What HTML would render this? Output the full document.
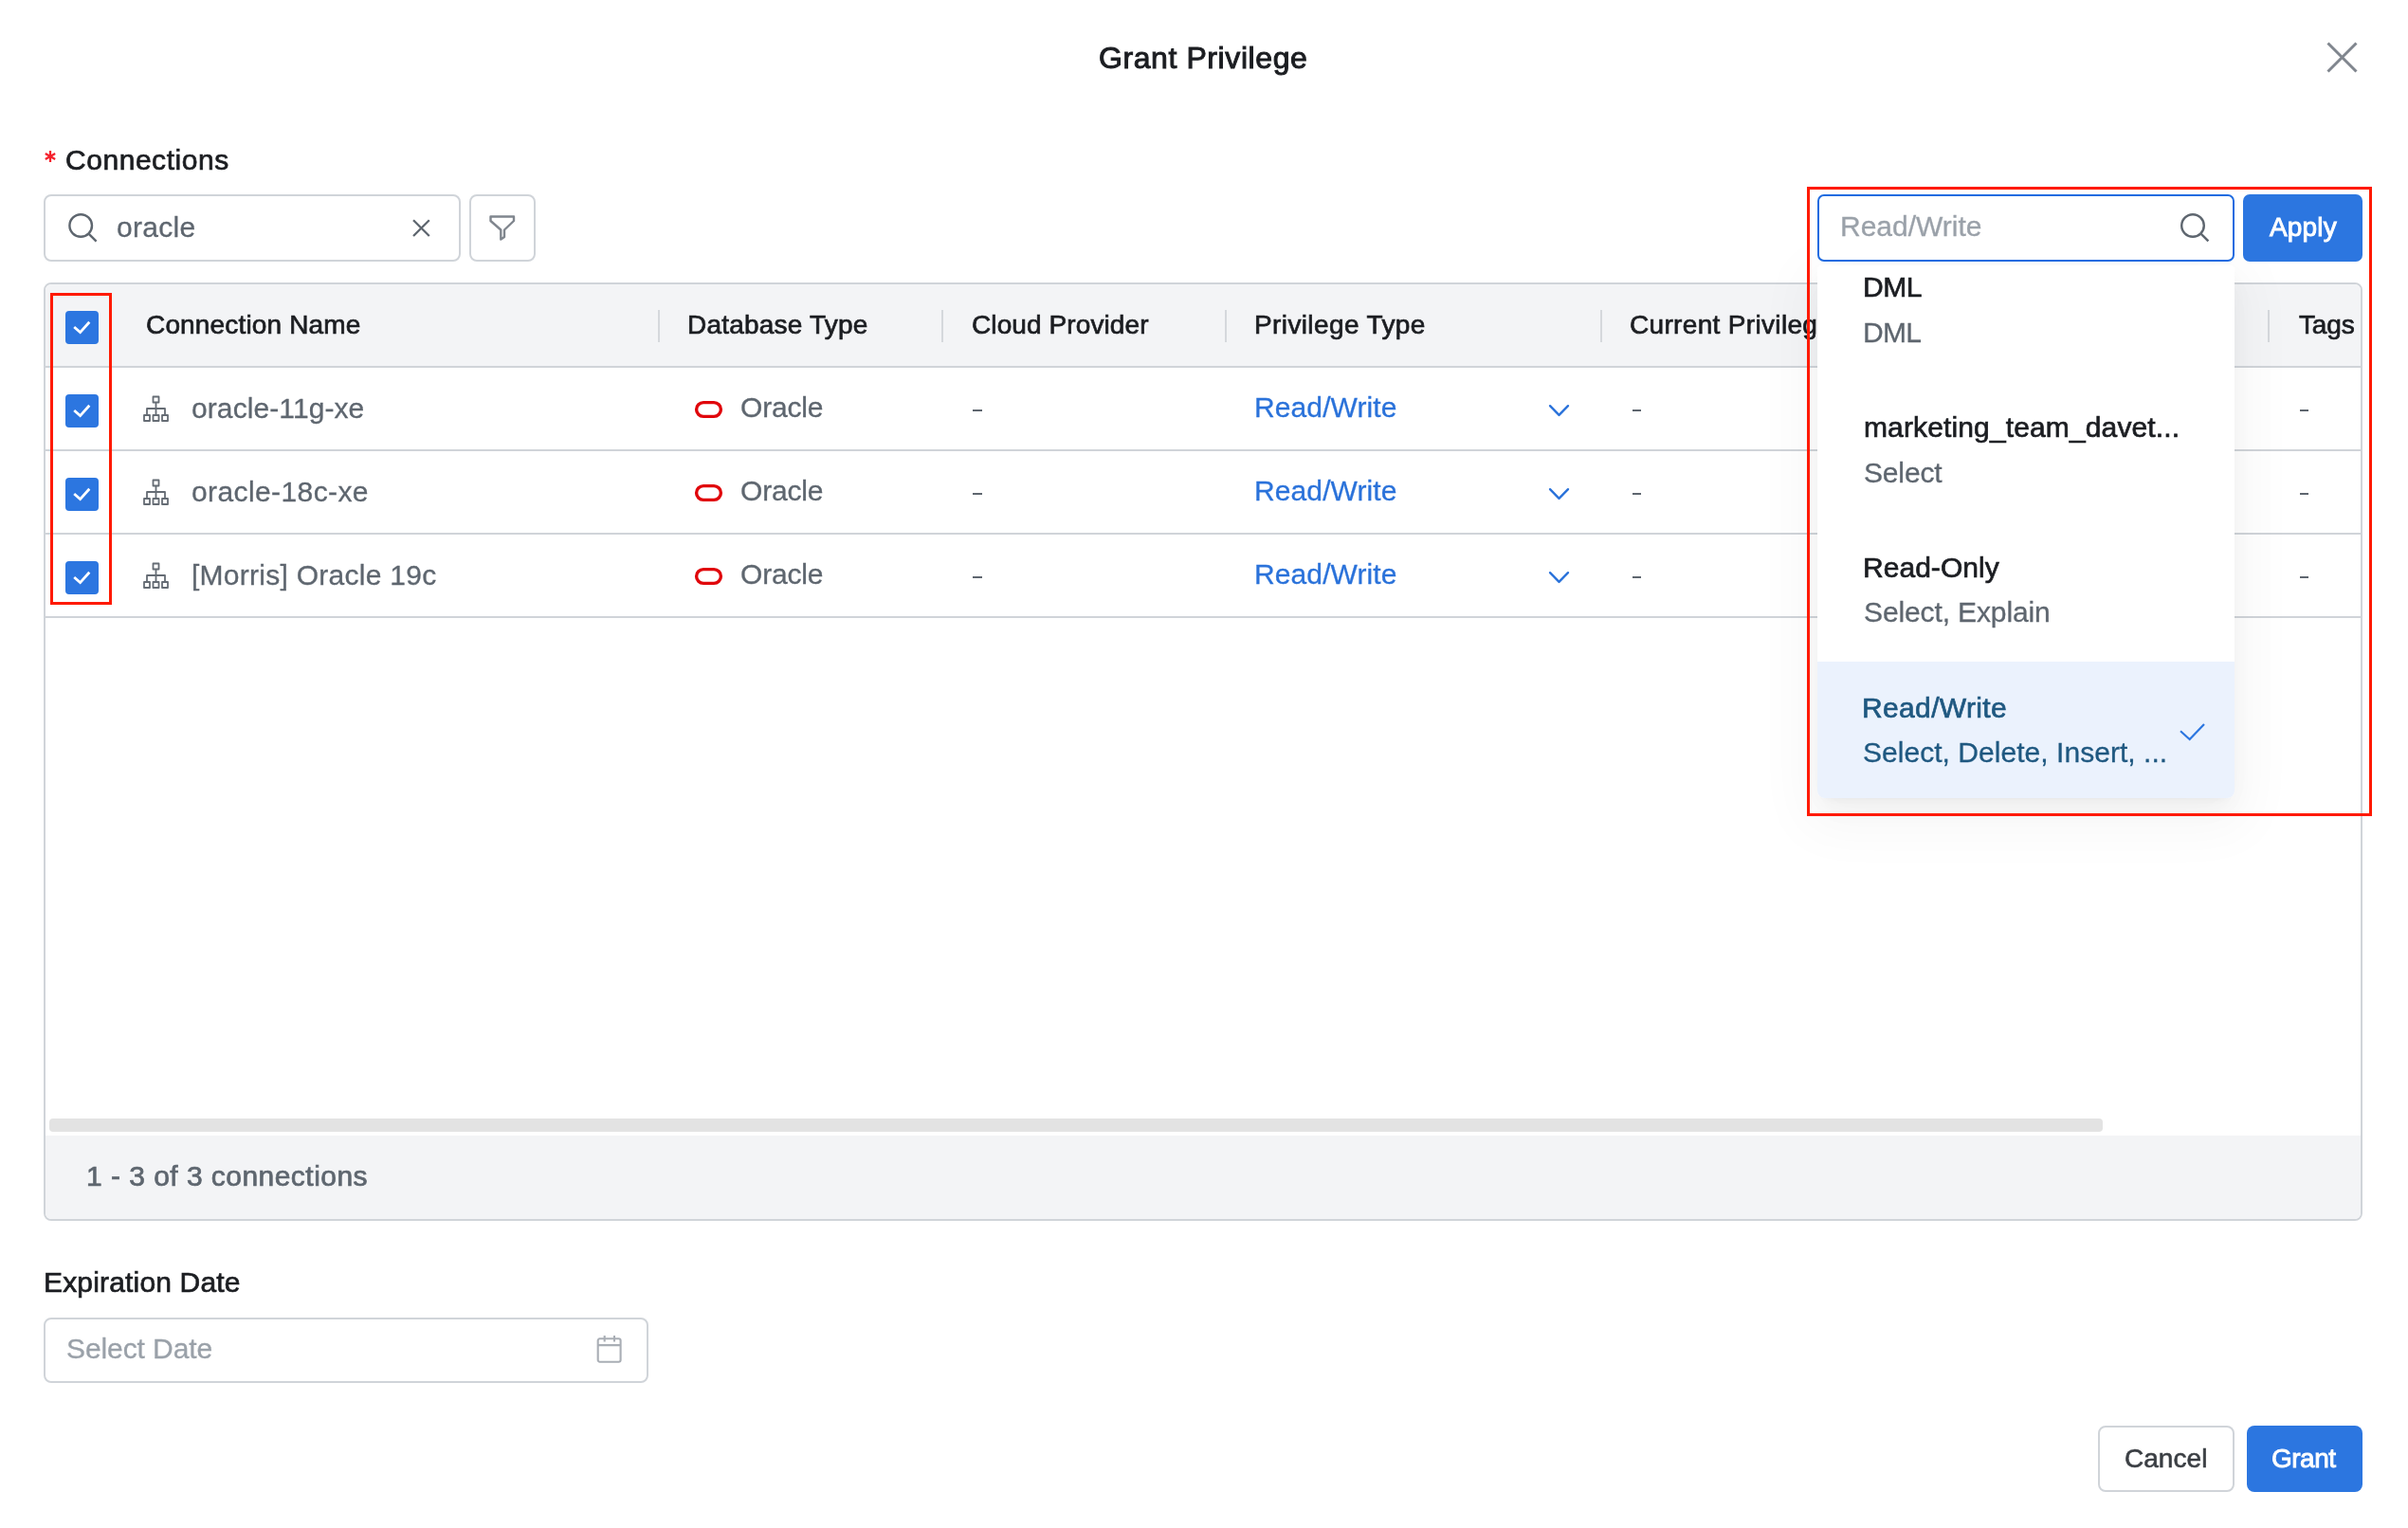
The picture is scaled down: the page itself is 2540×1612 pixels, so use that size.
<!DOCTYPE html>
<html><head><meta charset="utf-8"><title>Grant Privilege</title><style>
html,body{margin:0;padding:0;background:#fff;width:2540px;height:1612px;overflow:hidden;position:relative;font-family:"Liberation Sans",sans-serif;}
.t{position:absolute;white-space:nowrap;line-height:1;will-change:transform;}
.b{position:absolute;box-sizing:border-box;}
svg{position:absolute;overflow:visible;}
</style></head><body>
<div class="t" style="left:1158.80px;top:45.15px;font-size:32px;color:#1b1d21;letter-spacing:0.586px;-webkit-text-stroke:1.0px #1b1d21;">Grant Privilege</div>
<svg style="left:2454px;top:44px" width="33" height="33" viewBox="0 0 33 33"><path d="M1.5 1.5L31.5 31.5M31.5 1.5L1.5 31.5" stroke="#80868e" stroke-width="3" fill="none"/></svg>
<svg style="left:46px;top:158px" width="14" height="14" viewBox="0 0 14 14"><g stroke="#f5222d" stroke-width="2.3" fill="none"><path d="M7 1V13"/><path d="M1.8 4L12.2 10"/><path d="M1.8 10L12.2 4"/></g></svg>
<div class="t" style="left:69.20px;top:154.10px;font-size:30px;color:#1b1d21;letter-spacing:0.54px;-webkit-text-stroke:0.7px #1b1d21;">Connections</div>
<div class="b" style="left:46px;top:205px;width:440px;height:71px;border:2px solid #d0d4d9;border-radius:8px;"></div>
<svg style="left:70px;top:223px" width="36" height="36" viewBox="0 0 36 36"><circle cx="15.2" cy="15" r="11.8" stroke="#5e666f" stroke-width="2.4" fill="none"/><path d="M23.8 23.8L31.6 31.6" stroke="#5e666f" stroke-width="2.4" fill="none"/></svg>
<div class="t" style="left:122.70px;top:224.90px;font-size:30px;color:#5e666f;letter-spacing:0.28px;-webkit-text-stroke:0.3px #5e666f;">oracle</div>
<svg style="left:433px;top:229px" width="24" height="24" viewBox="0 0 24 24"><path d="M3 3.2L19.8 20M19.8 3.2L3 20" stroke="#5e666f" stroke-width="2.3" fill="none"/></svg>
<div class="b" style="left:495px;top:205px;width:70px;height:71px;border:2px solid #d0d4d9;border-radius:8px;"></div>
<svg style="left:514px;top:226px" width="32" height="30" viewBox="0 0 32 30"><path d="M3.5 2.5H28V7L18 16.5V24L14.3 26.5V16.5L3.5 7Z" stroke="#80868e" stroke-width="2.4" fill="none" stroke-linejoin="round"/></svg>
<div class="b" style="left:46px;top:298px;width:2446px;height:990px;border:2px solid #d0d4d9;border-radius:8px;overflow:hidden;background:#fff;"><div class="b" style="left:0;top:0;width:2442px;height:88px;background:#f3f4f6;border-bottom:2px solid #d0d4d9;"></div><div class="b" style="left:0;top:174px;width:2442px;height:2px;background:#d0d4d9;"></div><div class="b" style="left:0;top:262px;width:2442px;height:2px;background:#d0d4d9;"></div><div class="b" style="left:0;top:350px;width:2442px;height:2px;background:#d0d4d9;"></div><div class="b" style="left:4px;top:880px;width:2166px;height:14px;background:#e3e3e3;border-radius:4px;"></div><div class="b" style="left:0;top:898px;width:2442px;height:90px;background:#f3f4f6;"></div></div>
<div class="b" style="left:694px;top:327px;width:2px;height:34px;background:#d5d8dc;"></div>
<div class="b" style="left:993px;top:327px;width:2px;height:34px;background:#d5d8dc;"></div>
<div class="b" style="left:1292px;top:327px;width:2px;height:34px;background:#d5d8dc;"></div>
<div class="b" style="left:1688px;top:327px;width:2px;height:34px;background:#d5d8dc;"></div>
<div class="b" style="left:2392px;top:327px;width:2px;height:34px;background:#d5d8dc;"></div>
<div class="b" style="left:69px;top:328px;width:35px;height:35px;background:#2c76e0;border-radius:4px;"></div><svg style="left:69px;top:328px" width="35" height="35" viewBox="0 0 35 35"><path d="M9.2 17L15.6 22.6L25.3 11.8" stroke="#fff" stroke-width="2.8" fill="none"/></svg>
<div class="t" style="left:153.60px;top:328.90px;font-size:28px;color:#1b1d21;letter-spacing:0.164px;-webkit-text-stroke:0.7px #1b1d21;">Connection Name</div>
<div class="t" style="left:724.50px;top:328.90px;font-size:28px;color:#1b1d21;letter-spacing:0.208px;-webkit-text-stroke:0.7px #1b1d21;">Database Type</div>
<div class="t" style="left:1024.70px;top:328.90px;font-size:28px;color:#1b1d21;letter-spacing:0.1px;-webkit-text-stroke:0.7px #1b1d21;">Cloud Provider</div>
<div class="t" style="left:1323.00px;top:328.90px;font-size:28px;color:#1b1d21;letter-spacing:0.385px;-webkit-text-stroke:0.7px #1b1d21;">Privilege Type</div>
<div class="t" style="left:1719.00px;top:328.90px;font-size:28px;color:#1b1d21;letter-spacing:0.33px;-webkit-text-stroke:0.7px #1b1d21;">Current Privileges</div>
<div class="t" style="left:2425.30px;top:328.90px;font-size:28px;color:#1b1d21;letter-spacing:-0.167px;-webkit-text-stroke:0.7px #1b1d21;">Tags</div>
<div class="b" style="left:69px;top:416px;width:35px;height:35px;background:#2c76e0;border-radius:4px;"></div><svg style="left:69px;top:416px" width="35" height="35" viewBox="0 0 35 35"><path d="M9.2 17L15.6 22.6L25.3 11.8" stroke="#fff" stroke-width="2.8" fill="none"/></svg>
<svg style="left:150px;top:417px" width="29" height="29" viewBox="0 0 29 29"><g stroke="#656c74" stroke-width="1.8" fill="none" stroke-linejoin="round"><rect x="11.5" y="1.5" width="6" height="6"/><rect x="2" y="21" width="6" height="6"/><rect x="11.5" y="21" width="6" height="6"/><rect x="21" y="21" width="6" height="6"/><path d="M14.5 7.5V21M5 21V14H24V21"/></g></svg>
<div class="t" style="left:201.70px;top:416.10px;font-size:30px;color:#5e666f;letter-spacing:0.092px;-webkit-text-stroke:0.3px #5e666f;">oracle-11g-xe</div>
<svg style="left:732px;top:422px" width="31" height="20" viewBox="0 0 31 20"><rect x="2.6" y="2.6" width="25.8" height="14.8" rx="7.4" stroke="#e0060b" stroke-width="3.4" fill="none"/></svg>
<div class="t" style="left:780.80px;top:414.90px;font-size:30px;color:#5e666f;letter-spacing:-0.2px;-webkit-text-stroke:0.3px #5e666f;">Oracle</div>
<div class="t" style="left:1323.00px;top:415.00px;font-size:30px;color:#2a72da;letter-spacing:0.111px;-webkit-text-stroke:0.3px #2a72da;">Read/Write</div>
<svg style="left:1632px;top:425px" width="25" height="16" viewBox="0 0 25 16"><path d="M3 3.2L12.5 12.9L22 3.2" stroke="#2a72da" stroke-width="2.4" fill="none" stroke-linecap="round" stroke-linejoin="round"/></svg>
<div class="b" style="left:1026.3px;top:431.6px;width:9.6px;height:2.5px;background:#5e666f;"></div>
<div class="b" style="left:1721.5px;top:431.6px;width:9.6px;height:2.5px;background:#5e666f;"></div>
<div class="b" style="left:2425.5px;top:431.6px;width:9.6px;height:2.5px;background:#5e666f;"></div>
<div class="b" style="left:69px;top:504px;width:35px;height:35px;background:#2c76e0;border-radius:4px;"></div><svg style="left:69px;top:504px" width="35" height="35" viewBox="0 0 35 35"><path d="M9.2 17L15.6 22.6L25.3 11.8" stroke="#fff" stroke-width="2.8" fill="none"/></svg>
<svg style="left:150px;top:505px" width="29" height="29" viewBox="0 0 29 29"><g stroke="#656c74" stroke-width="1.8" fill="none" stroke-linejoin="round"><rect x="11.5" y="1.5" width="6" height="6"/><rect x="2" y="21" width="6" height="6"/><rect x="11.5" y="21" width="6" height="6"/><rect x="21" y="21" width="6" height="6"/><path d="M14.5 7.5V21M5 21V14H24V21"/></g></svg>
<div class="t" style="left:201.70px;top:504.10px;font-size:30px;color:#5e666f;letter-spacing:0.4px;-webkit-text-stroke:0.3px #5e666f;">oracle-18c-xe</div>
<svg style="left:732px;top:510px" width="31" height="20" viewBox="0 0 31 20"><rect x="2.6" y="2.6" width="25.8" height="14.8" rx="7.4" stroke="#e0060b" stroke-width="3.4" fill="none"/></svg>
<div class="t" style="left:780.80px;top:502.90px;font-size:30px;color:#5e666f;letter-spacing:-0.2px;-webkit-text-stroke:0.3px #5e666f;">Oracle</div>
<div class="t" style="left:1323.00px;top:503.00px;font-size:30px;color:#2a72da;letter-spacing:0.111px;-webkit-text-stroke:0.3px #2a72da;">Read/Write</div>
<svg style="left:1632px;top:513px" width="25" height="16" viewBox="0 0 25 16"><path d="M3 3.2L12.5 12.9L22 3.2" stroke="#2a72da" stroke-width="2.4" fill="none" stroke-linecap="round" stroke-linejoin="round"/></svg>
<div class="b" style="left:1026.3px;top:519.6px;width:9.6px;height:2.5px;background:#5e666f;"></div>
<div class="b" style="left:1721.5px;top:519.6px;width:9.6px;height:2.5px;background:#5e666f;"></div>
<div class="b" style="left:2425.5px;top:519.6px;width:9.6px;height:2.5px;background:#5e666f;"></div>
<div class="b" style="left:69px;top:592px;width:35px;height:35px;background:#2c76e0;border-radius:4px;"></div><svg style="left:69px;top:592px" width="35" height="35" viewBox="0 0 35 35"><path d="M9.2 17L15.6 22.6L25.3 11.8" stroke="#fff" stroke-width="2.8" fill="none"/></svg>
<svg style="left:150px;top:593px" width="29" height="29" viewBox="0 0 29 29"><g stroke="#656c74" stroke-width="1.8" fill="none" stroke-linejoin="round"><rect x="11.5" y="1.5" width="6" height="6"/><rect x="2" y="21" width="6" height="6"/><rect x="11.5" y="21" width="6" height="6"/><rect x="21" y="21" width="6" height="6"/><path d="M14.5 7.5V21M5 21V14H24V21"/></g></svg>
<div class="t" style="left:201.75px;top:592.10px;font-size:30px;color:#5e666f;letter-spacing:0.264px;-webkit-text-stroke:0.3px #5e666f;">[Morris] Oracle 19c</div>
<svg style="left:732px;top:598px" width="31" height="20" viewBox="0 0 31 20"><rect x="2.6" y="2.6" width="25.8" height="14.8" rx="7.4" stroke="#e0060b" stroke-width="3.4" fill="none"/></svg>
<div class="t" style="left:780.80px;top:590.90px;font-size:30px;color:#5e666f;letter-spacing:-0.2px;-webkit-text-stroke:0.3px #5e666f;">Oracle</div>
<div class="t" style="left:1323.00px;top:591.00px;font-size:30px;color:#2a72da;letter-spacing:0.111px;-webkit-text-stroke:0.3px #2a72da;">Read/Write</div>
<svg style="left:1632px;top:601px" width="25" height="16" viewBox="0 0 25 16"><path d="M3 3.2L12.5 12.9L22 3.2" stroke="#2a72da" stroke-width="2.4" fill="none" stroke-linecap="round" stroke-linejoin="round"/></svg>
<div class="b" style="left:1026.3px;top:607.6px;width:9.6px;height:2.5px;background:#5e666f;"></div>
<div class="b" style="left:1721.5px;top:607.6px;width:9.6px;height:2.5px;background:#5e666f;"></div>
<div class="b" style="left:2425.5px;top:607.6px;width:9.6px;height:2.5px;background:#5e666f;"></div>
<div class="t" style="left:90.60px;top:1225.80px;font-size:30px;color:#5e666f;letter-spacing:0.462px;-webkit-text-stroke:0.7px #5e666f;">1 - 3 of 3 connections</div>
<div class="b" style="left:53px;top:309px;width:65px;height:329px;border:3px solid #ff1a00;"></div>
<div class="t" style="left:45.80px;top:1338.00px;font-size:30px;color:#1b1d21;letter-spacing:0.171px;-webkit-text-stroke:0.7px #1b1d21;">Expiration Date</div>
<div class="b" style="left:46px;top:1390px;width:638px;height:69px;border:2px solid #d0d4d9;border-radius:8px;"></div>
<div class="t" style="left:70.20px;top:1407.80px;font-size:30px;color:#9aa1a9;letter-spacing:-0.09px;-webkit-text-stroke:0.3px #9aa1a9;">Select Date</div>
<svg style="left:628px;top:1408px" width="30" height="31" viewBox="0 0 30 31"><g stroke="#a9aeb5" stroke-width="2.1" fill="none"><rect x="2.7" y="4.3" width="23.9" height="24.4" rx="2"/><path d="M2.7 11.1H26.6M9.7 1V7.5M20 1V7.5"/></g></svg>
<div class="b" style="left:2213px;top:1504px;width:144px;height:70px;border:2px solid #d0d4d9;border-radius:8px;"></div>
<div class="t" style="left:2240.60px;top:1525.00px;font-size:28px;color:#3a3e43;letter-spacing:0.04px;-webkit-text-stroke:0.6px #3a3e43;">Cancel</div>
<div class="b" style="left:2370px;top:1504px;width:122px;height:70px;background:#2c76e0;border-radius:8px;"></div>
<div class="t" style="left:2396.20px;top:1525.30px;font-size:28px;color:#ffffff;letter-spacing:-0.5px;-webkit-text-stroke:0.9px #ffffff;">Grant</div>
<div class="b" style="left:1917px;top:280px;width:440px;height:562px;background:#fff;border-radius:4px 4px 8px 8px;box-shadow:0 12px 32px 0 rgba(0,0,0,.045),0 6px 12px -8px rgba(0,0,0,.08),0 18px 56px 16px rgba(0,0,0,.035);overflow:hidden;"><div class="b" style="left:0;top:418px;width:440px;height:144px;background:#ebf2fd;"></div></div>
<div class="b" style="left:1917px;top:205px;width:440px;height:71px;border:2px solid #1f6be0;border-radius:7px;background:#fff;"></div>
<div class="t" style="left:1940.90px;top:223.90px;font-size:30px;color:#9aa1a9;-webkit-text-stroke:0.3px #9aa1a9;">Read/Write</div>
<svg style="left:2298px;top:223px" width="36" height="36" viewBox="0 0 36 36"><circle cx="15" cy="15" r="11.8" stroke="#5e666f" stroke-width="2.4" fill="none"/><path d="M23.6 23.6L31.4 31.4" stroke="#5e666f" stroke-width="2.4" fill="none"/></svg>
<div class="b" style="left:2366px;top:205px;width:126px;height:71px;background:#2c76e0;border-radius:7px;"></div>
<div class="t" style="left:2393.80px;top:226.00px;font-size:28px;color:#ffffff;letter-spacing:0.175px;-webkit-text-stroke:0.9px #ffffff;">Apply</div>
<div class="t" style="left:1965.00px;top:287.90px;font-size:30px;color:#1b1d21;letter-spacing:-0.5px;-webkit-text-stroke:0.7px #1b1d21;">DML</div>
<div class="t" style="left:1965.00px;top:336.00px;font-size:30px;color:#5e666f;letter-spacing:-0.75px;-webkit-text-stroke:0.3px #5e666f;">DML</div>
<div class="t" style="left:1965.70px;top:435.80px;font-size:30px;color:#1b1d21;letter-spacing:0.132px;-webkit-text-stroke:0.7px #1b1d21;">marketing_team_davet...</div>
<div class="t" style="left:1965.70px;top:483.70px;font-size:30px;color:#5e666f;letter-spacing:-0.16px;-webkit-text-stroke:0.3px #5e666f;">Select</div>
<div class="t" style="left:1965.00px;top:584.40px;font-size:30px;color:#1b1d21;letter-spacing:0.038px;-webkit-text-stroke:0.7px #1b1d21;">Read-Only</div>
<div class="t" style="left:1965.70px;top:630.90px;font-size:30px;color:#5e666f;letter-spacing:-0.121px;-webkit-text-stroke:0.3px #5e666f;">Select, Explain</div>
<div class="t" style="left:1964.30px;top:732.20px;font-size:30px;color:#1f5880;letter-spacing:0.356px;-webkit-text-stroke:0.7px #1f5880;">Read/Write</div>
<div class="t" style="left:1965.30px;top:779.20px;font-size:30px;color:#1f5880;letter-spacing:0.038px;-webkit-text-stroke:0.3px #1f5880;">Select, Delete, Insert, ...</div>
<svg style="left:2298px;top:761px" width="30" height="22" viewBox="0 0 30 22"><path d="M2 10.2L11.7 19L27 3" stroke="#2c76e0" stroke-width="2.2" fill="none"/></svg>
<div class="b" style="left:1906px;top:197px;width:596px;height:664px;border:3px solid #ff1a00;"></div>
</body></html>
